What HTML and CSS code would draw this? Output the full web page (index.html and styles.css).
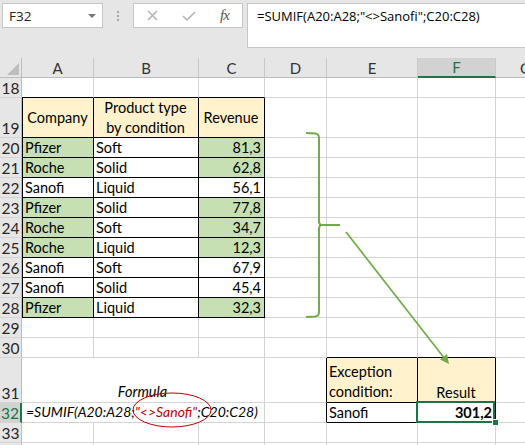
FILE: index.html
```html
<!DOCTYPE html>
<html lang="en">
<head>
  <meta charset="UTF-8" />
  <title>SUMIF with exception condition</title>
  <link rel="stylesheet" href="styles.css">
</head>
<body>

<div class="excel">
  <div class="toolbar">
    <div class="name-box">F32<span class="caret"></span></div>
    <div class="grip"><i></i><i></i><i></i></div>
    <div class="fx-buttons">
      <svg class="btn-cancel" width="11" height="11" viewBox="0 0 11 11">
        <path d="M1 1 L10 10 M10 1 L1 10" />
      </svg>
      <svg class="btn-enter" width="14" height="10" viewBox="0 0 14 10">
        <path d="M1 5 L5 9 L13 1" />
      </svg>
      <span class="fx">fx</span>
    </div>
    <div class="formula-input">=SUMIF(A20:A28;"&lt;&gt;Sanofi";C20:C28)</div>
  </div>

  <div class="sheet">
    <!-- column headers -->
    <div class="corner"><span></span></div>
    <div class="ch">A</div><div class="ch">B</div><div class="ch">C</div><div class="ch">D</div>
    <div class="ch">E</div><div class="ch sel">F</div><div class="ch">G</div>

    <div class="rh">18</div>
    <div class="c tb"></div><div class="c tb"></div><div class="c tb"></div><div class="c"></div><div class="c"></div><div class="c"></div><div class="c"></div>

    <div class="rh">19</div>
    <div class="c t tl y hd">Company</div>
    <div class="c t y hd">Product type<br>by condition</div>
    <div class="c t y hd">Revenue</div>
    <div class="c"></div><div class="c"></div><div class="c"></div><div class="c"></div>

    <div class="rh">20</div>
    <div class="c t tl g">Pfizer</div><div class="c t">Soft</div><div class="c t g num">81,3</div>
    <div class="c"></div><div class="c"></div><div class="c"></div><div class="c"></div>

    <div class="rh">21</div>
    <div class="c t tl g">Roche</div><div class="c t">Solid</div><div class="c t g num">62,8</div>
    <div class="c"></div><div class="c"></div><div class="c"></div><div class="c"></div>

    <div class="rh">22</div>
    <div class="c t tl">Sanofi</div><div class="c t">Liquid</div><div class="c t num">56,1</div>
    <div class="c"></div><div class="c"></div><div class="c"></div><div class="c"></div>

    <div class="rh">23</div>
    <div class="c t tl g">Pfizer</div><div class="c t">Solid</div><div class="c t g num">77,8</div>
    <div class="c"></div><div class="c"></div><div class="c"></div><div class="c"></div>

    <div class="rh">24</div>
    <div class="c t tl g">Roche</div><div class="c t">Soft</div><div class="c t g num">34,7</div>
    <div class="c"></div><div class="c"></div><div class="c"></div><div class="c"></div>

    <div class="rh">25</div>
    <div class="c t tl g">Roche</div><div class="c t">Liquid</div><div class="c t g num">12,3</div>
    <div class="c"></div><div class="c"></div><div class="c"></div><div class="c"></div>

    <div class="rh">26</div>
    <div class="c t tl">Sanofi</div><div class="c t">Soft</div><div class="c t num">67,9</div>
    <div class="c"></div><div class="c"></div><div class="c"></div><div class="c"></div>

    <div class="rh">27</div>
    <div class="c t tl">Sanofi</div><div class="c t">Solid</div><div class="c t num">45,4</div>
    <div class="c"></div><div class="c"></div><div class="c"></div><div class="c"></div>

    <div class="rh">28</div>
    <div class="c t tl g">Pfizer</div><div class="c t">Liquid</div><div class="c t g num">32,3</div>
    <div class="c"></div><div class="c"></div><div class="c"></div><div class="c"></div>

    <div class="rh">29</div>
    <div class="c"></div><div class="c"></div><div class="c"></div><div class="c"></div><div class="c"></div><div class="c"></div><div class="c"></div>

    <div class="rh">30</div>
    <div class="c"></div><div class="c"></div><div class="c"></div><div class="c"></div><div class="c tb"></div><div class="c tb"></div><div class="c"></div>

    <div class="rh">31</div>
    <div class="c span3 center it">Formula</div>
    <div class="c tr"></div>
    <div class="c t y wrap">Exception<br>condition:</div>
    <div class="c t y center">Result</div>
    <div class="c"></div>

    <div class="rh sel">32</div>
    <div class="c span3 it formula">=SUMIF(A20:A28;<span class="red">"&lt;&gt;Sanofi"</span>;C20:C28)</div>
    <div class="c tr"></div>
    <div class="c t">Sanofi</div>
    <div class="c t num bold active">301,2</div>
    <div class="c"></div>

    <div class="rh">33</div>
    <div class="c"></div><div class="c"></div><div class="c"></div><div class="c"></div><div class="c"></div><div class="c"></div><div class="c"></div>

    <div class="rh"></div>
    <div class="c"></div><div class="c"></div><div class="c"></div><div class="c"></div><div class="c"></div><div class="c"></div><div class="c"></div>
  </div>

  <!-- shapes drawn over the sheet -->
  <svg class="drawing" width="525" height="445" viewBox="0 0 525 445">
    <path class="brace" d="M306 133 L315 133.5 Q319 134 319 138 L319 221 Q319 225 322 225 L340 225 M322 225 Q319 225 319 229 L319 312 Q319 316 315 316.5 L306 317" />
    <line class="arrow" x1="346" y1="232" x2="445" y2="359" />
    <polygon class="arrow-head" points="449,364 440,359.5 447,354" />
    <ellipse class="oval" cx="172" cy="410" rx="39" ry="17" />
  </svg>
</div>

</body>
</html>
```

FILE: styles.css
```css
html, body {
  margin: 0;
  padding: 0;
  background: #fff;
  font-family: Lato, "Liberation Sans", sans-serif;
  color: #000;
}

.excel {
  position: relative;
  width: 525px;
  height: 445px;
  overflow: hidden;
  background: #e6e6e6;
}

/* formula bar */
.toolbar {
  display: flex;
  align-items: flex-start;
  height: 58px;
  padding: 3px 0 0 2px;
  box-sizing: border-box;
}

.name-box {
  width: 101px;
  height: 25px;
  box-sizing: border-box;
  border: 1px solid #c6c6c6;
  background: #fff;
  display: flex;
  align-items: center;
  padding-left: 6px;
  font-family: "Open Sans", sans-serif;
  font-size: 13.5px;
  color: #222;
}

.caret {
  margin-left: auto;
  margin-right: 6px;
  border-left: 4px solid transparent;
  border-right: 4px solid transparent;
  border-top: 4px solid #777;
}

.grip {
  width: 30px;
  height: 25px;
  display: flex;
  flex-direction: column;
  align-items: center;
  justify-content: center;
  gap: 2px;
}

.grip i {
  width: 2px;
  height: 2px;
  background: #a8a8a8;
}

.fx-buttons {
  width: 110px;
  height: 25px;
  box-sizing: border-box;
  border: 1px solid #c6c6c6;
  background: #fff;
  display: flex;
  align-items: center;
  padding-left: 13px;
}

.fx-buttons svg {
  fill: none;
  stroke: #b4b4b4;
  stroke-width: 1.6;
}

.btn-enter {
  margin-left: 24px;
}

.fx {
  margin-left: 24px;
  font-family: "Liberation Serif", serif;
  font-style: italic;
  font-size: 15px;
  color: #555;
  letter-spacing: -1px;
}

.formula-input {
  flex: 1;
  height: 45px;
  margin-left: 4px;
  margin-right: -10px;
  box-sizing: border-box;
  border: 1px solid #c6c6c6;
  background: #fff;
  padding: 3px 0 0 9px;
  font-family: "Open Sans", sans-serif;
  font-size: 13px;
  color: #000;
}

/* sheet grid */
.sheet {
  display: grid;
  grid-template-columns: 22px 72px 105px 66px 62px 91px 78px 60px;
  grid-template-rows: 20px 20px 40px repeat(11, 20px) 45px 20px 20px 20px;
  width: 556px;
  background: #fff;
}

.corner, .ch, .rh, .c {
  box-sizing: border-box;
}

.corner {
  background: #e6e6e6;
  border-right: 1px solid #bcbcbc;
  border-bottom: 1px solid #bcbcbc;
  display: flex;
  justify-content: flex-end;
  align-items: flex-end;
  padding: 0 2px 2px 0;
}

.corner span {
  border-left: 12px solid transparent;
  border-bottom: 12px solid #bdbdbd;
}

.ch {
  background: #e6e6e6;
  border-right: 1px solid #c8c8c8;
  border-bottom: 1px solid #bcbcbc;
  display: flex;
  align-items: center;
  justify-content: center;
  font-size: 15px;
  color: #333;
}

.ch.sel {
  background: #d2d2d2;
  border-bottom: 2px solid #217346;
  color: #217346;
}

.rh {
  background: #e6e6e6;
  border-right: 1px solid #bcbcbc;
  border-bottom: 1px solid #d4d4d4;
  display: flex;
  align-items: flex-end;
  justify-content: center;
  font-size: 15.5px;
  line-height: 18px;
  color: #262626;
}

.rh.sel {
  background: #d2d2d2;
  border-right: 2px solid #217346;
  color: #217346;
}

.c {
  border-right: 1px solid #d4d4d4;
  border-bottom: 1px solid #d4d4d4;
  display: flex;
  align-items: flex-end;
  padding: 0 3px 0 2px;
  font-size: 14.5px;
  line-height: 18px;
  white-space: nowrap;
}

/* table borders */
.t {
  border-right-color: #000;
  border-bottom-color: #000;
}

.tl {
  border-left: 1px solid #000;
}

.tb {
  border-bottom-color: #000;
}

.tr {
  border-right-color: #000;
}

.y {
  background: #fff2cc;
}

.g {
  background: #c6e0b4;
}

.hd {
  align-items: center;
  justify-content: center;
  text-align: center;
  line-height: 20px;
}

.wrap {
  line-height: 20px;
}

.center {
  justify-content: center;
}

.num {
  justify-content: flex-end;
}

.bold {
  font-weight: bold;
}

.it {
  font-style: italic;
}

.span3 {
  grid-column: span 3;
  padding-bottom: 1px;
}

.formula {
  padding-left: 4px;
  font-size: 14px;
}

.red {
  color: #c00000;
}

.active {
  position: relative;
}

.active::after {
  content: "";
  position: absolute;
  left: -2px;
  top: -2px;
  right: 0;
  bottom: -1px;
  border: 2px solid #217346;
}

.active::before {
  content: "";
  position: absolute;
  right: -4px;
  bottom: -4px;
  width: 5px;
  height: 5px;
  background: #217346;
  border: 1px solid #fff;
  z-index: 1;
}

/* shapes */
.drawing {
  position: absolute;
  top: 0;
  left: 0;
  pointer-events: none;
}

.brace {
  fill: none;
  stroke: #70ad47;
  stroke-width: 2;
}

.arrow {
  stroke: #70ad47;
  stroke-width: 1.7;
}

.arrow-head {
  fill: #70ad47;
}

.oval {
  fill: none;
  stroke: #c00000;
  stroke-width: 1;
}
```
